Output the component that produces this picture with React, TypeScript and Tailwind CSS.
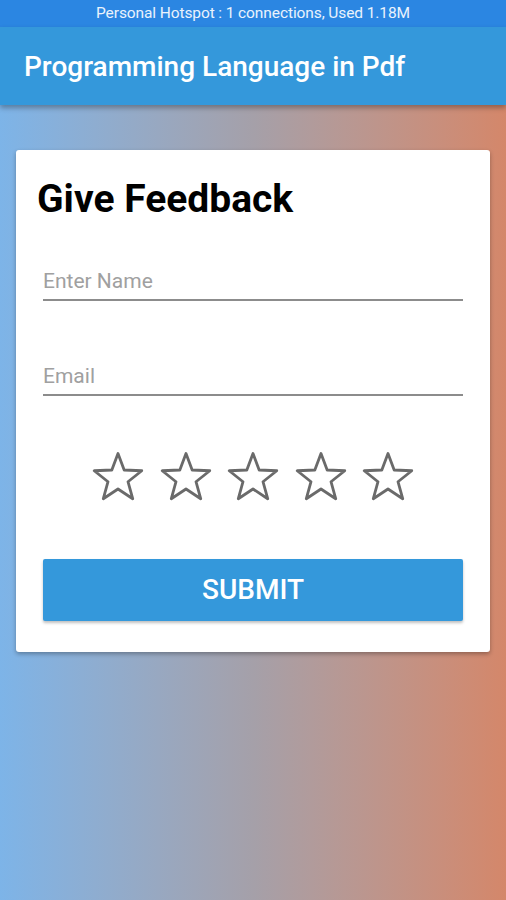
import React from "react";

const starPoints = (() => {
  const cx = 26;
  const cy = 26.5;
  const outer = 25;
  const inner = 10.5;
  const pts: string[] = [];
  for (let i = 0; i < 10; i++) {
    const r = i % 2 === 0 ? outer : inner;
    const a = -Math.PI / 2 + (i * Math.PI) / 5;
    pts.push(`${(cx + r * Math.cos(a)).toFixed(2)},${(cy + r * Math.sin(a)).toFixed(2)}`);
  }
  return pts.join(" ");
})();

function Star() {
  return (
    <svg width="52" height="50" viewBox="0 0 52 50" className="block">
      <polygon
        points={starPoints}
        fill="none"
        stroke="#6a6a6a"
        strokeWidth="2.8"
        strokeLinejoin="round"
      />
    </svg>
  );
}

function Field({ label }: { label: string }) {
  return (
    <div className="flex flex-col">
      <span className="text-[21px] leading-[24px] text-[#a0a0a0] pt-[3px]">{label}</span>
      <div className="h-[2px] bg-[#8c8c8c] mt-[6px]" />
    </div>
  );
}

export default function App() {
  return (
    <div className="w-[506px] h-[900px] flex flex-col bg-gradient-to-r from-[#7db4e8] via-[#a5a0a9] to-[#d4876a] font-['Roboto',sans-serif] overflow-hidden">
      {/* status bar */}
      <div className="h-[27px] bg-[#2b86e2] flex items-center justify-center">
        <span className="text-[15.5px] text-white/90 tracking-[-0.1px]">
          Personal Hotspot : 1 connections, Used 1.18M
        </span>
      </div>

      {/* app bar */}
      <div className="h-[78px] bg-[#3498db] flex items-center px-6 shadow-[0_3px_5px_rgba(0,0,0,0.3)] z-10">
        <h1 className="text-[28px] font-medium text-white pt-[2px]">Programming Language in Pdf</h1>
      </div>

      {/* card */}
      <div className="px-4 pt-[45px]">
        <div className="bg-white rounded-[3px] shadow-[0_2px_4px_rgba(0,0,0,0.3)] h-[502px] flex flex-col">
          <h2 className="text-[39px] font-bold text-black pl-[21px] pt-[25px] leading-[48px]">Give Feedback</h2>

          <div className="px-[27px] flex flex-col gap-[60px] mt-[43px]">
            <Field label="Enter Name" />
            <Field label="Email" />
          </div>

          <div className="flex justify-center gap-[15.5px] mt-[56px]">
            <Star />
            <Star />
            <Star />
            <Star />
            <Star />
          </div>

          <div className="px-[27px] mt-[57px]">
            <button className="w-full h-[62px] bg-[#3498db] rounded-[2px] shadow-[0_2px_3px_rgba(0,0,0,0.25)] text-white text-[28px] font-medium">
              SUBMIT
            </button>
          </div>
        </div>
      </div>
    </div>
  );
}
